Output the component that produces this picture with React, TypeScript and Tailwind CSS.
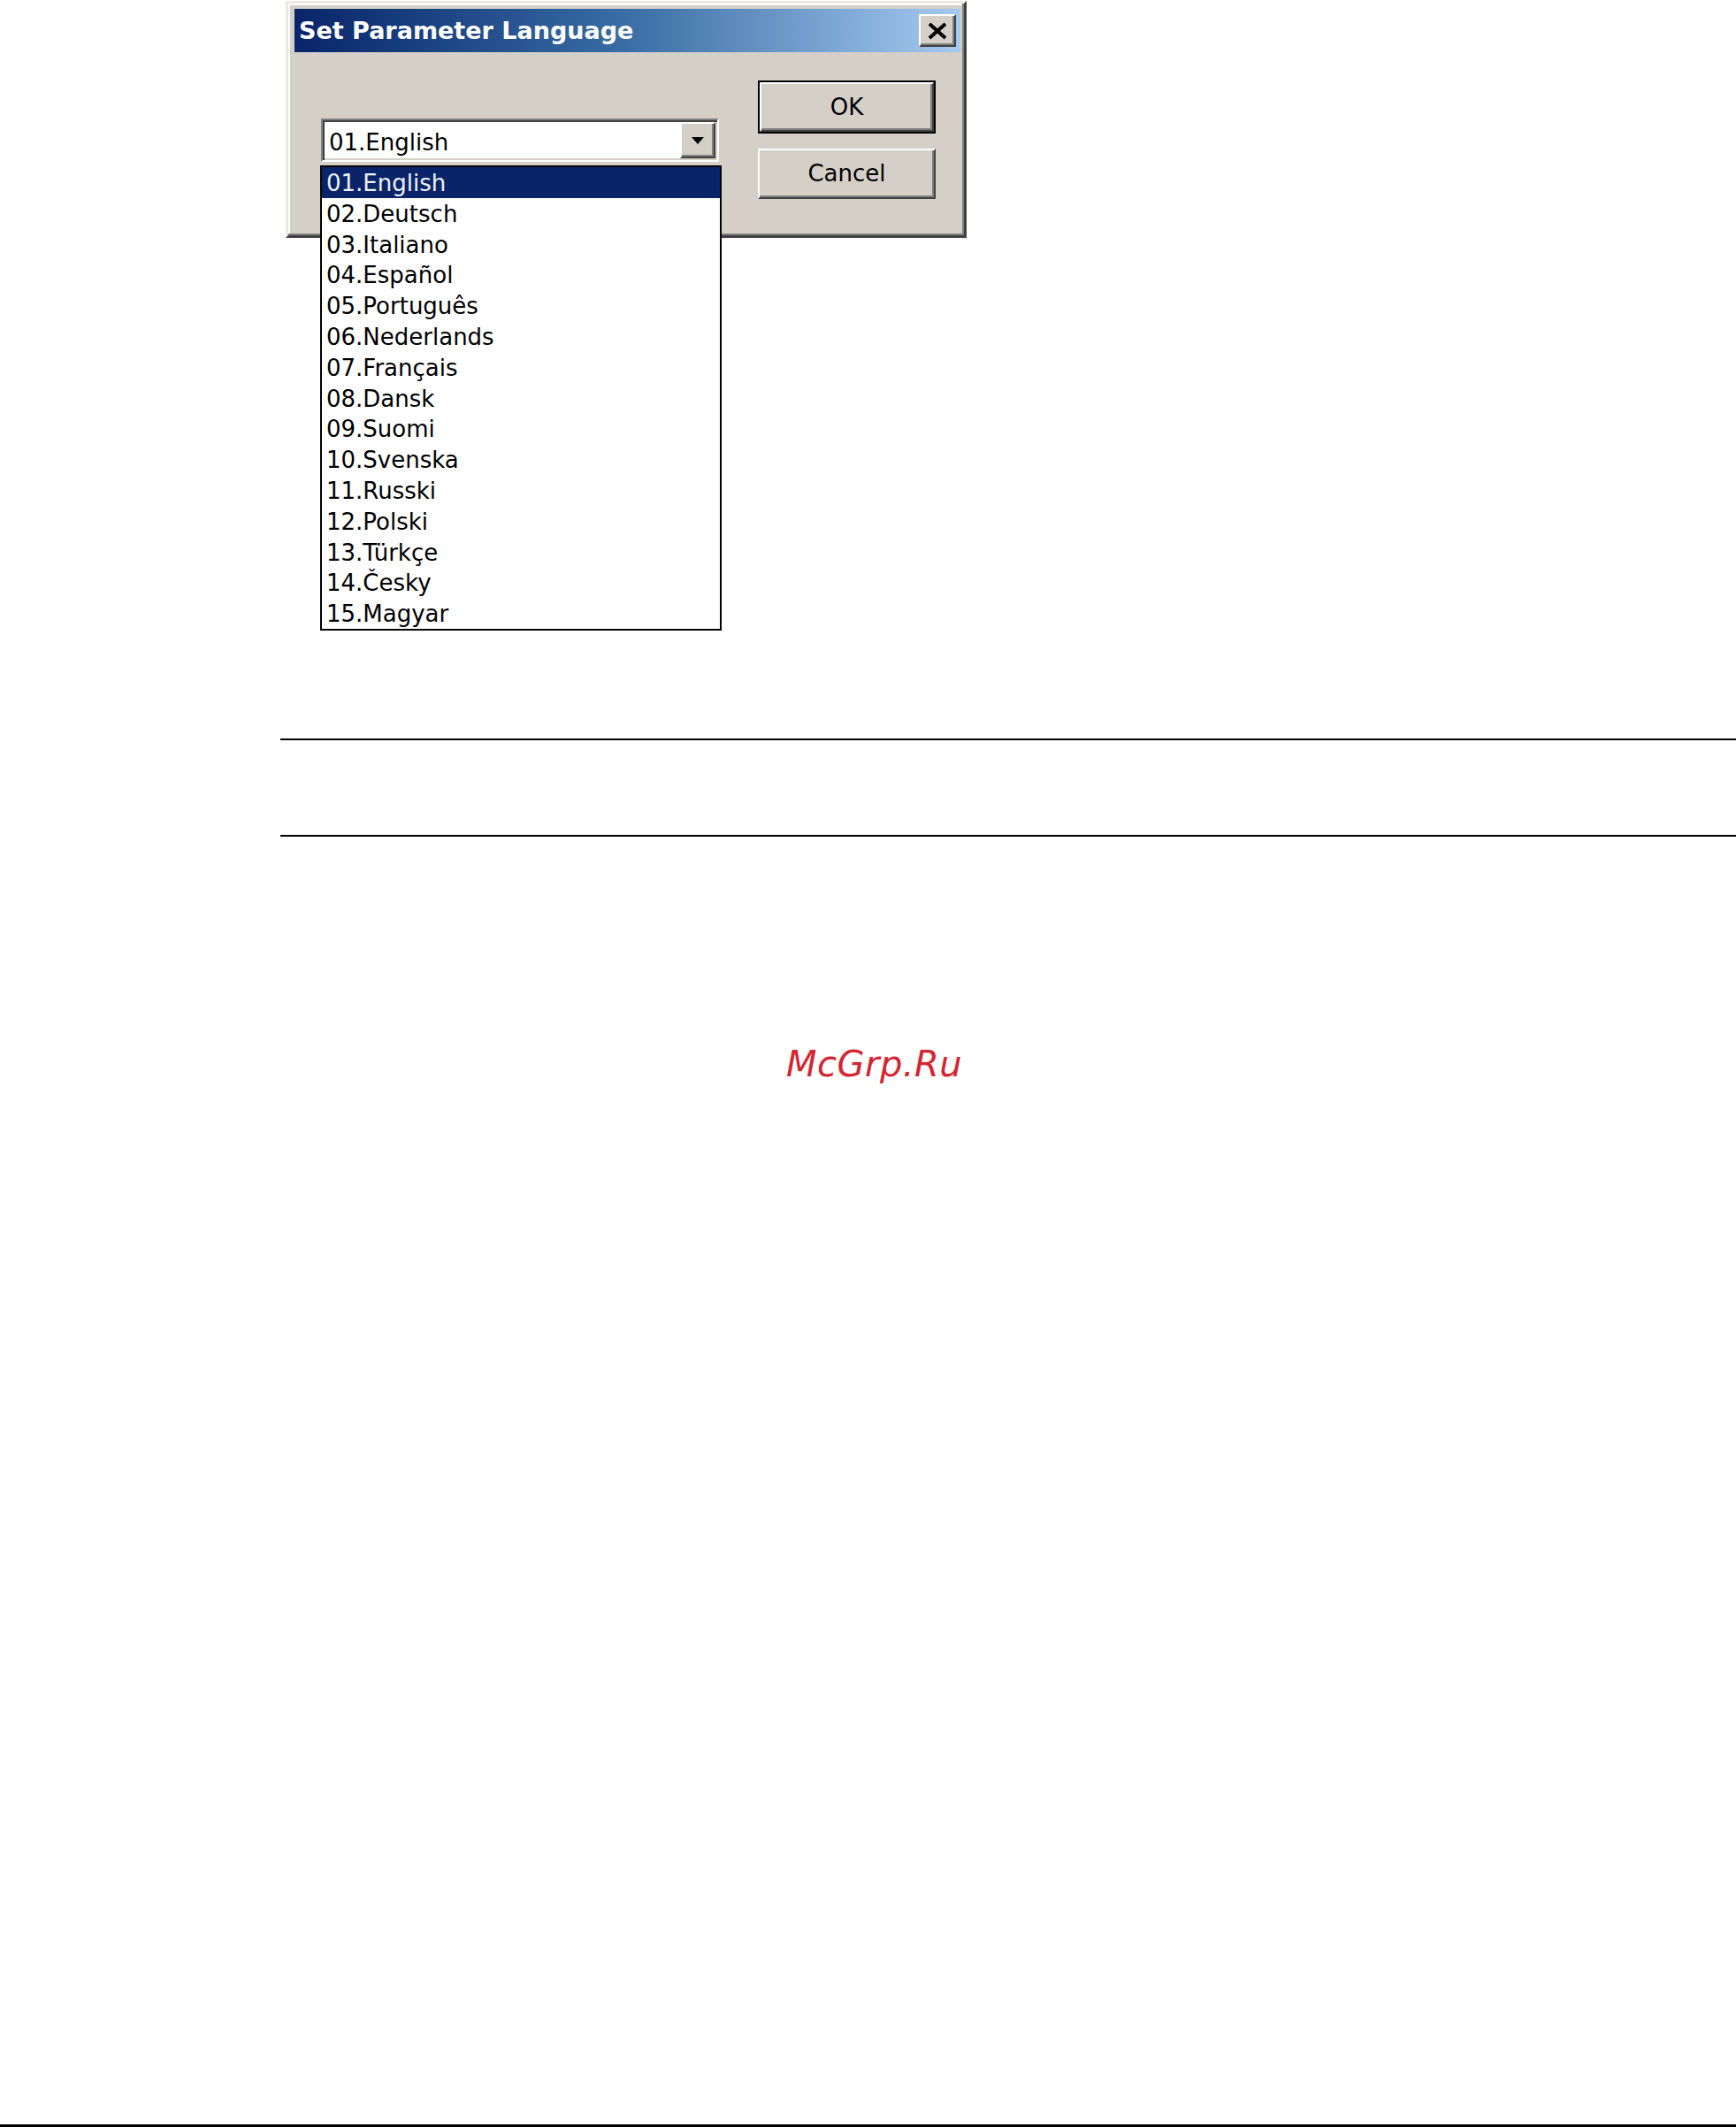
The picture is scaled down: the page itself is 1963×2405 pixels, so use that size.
const LANGUAGES = [
  '01.English',
  '02.Deutsch',
  '03.Italiano',
  '04.Español',
  '05.Português',
  '06.Nederlands',
  '07.Français',
  '08.Dansk',
  '09.Suomi',
  '10.Svenska',
  '11.Russki',
  '12.Polski',
  '13.Türkçe',
  '14.Česky',
  '15.Magyar',
];

const FONT = "font-['DejaVu_Sans',Verdana,sans-serif]";

// classic raised 3d edge
const RAISED =
  'bg-[#d4d0c8] border-2 border-t-[#ffffff] border-l-[#ffffff] border-r-[#404040] border-b-[#404040] shadow-[inset_-2px_-2px_0_#808080]';

function CloseGlyph() {
  return (
    <svg width="24" height="20" viewBox="0 0 24 20">
      <path d="M3 2 L21 18 M21 2 L3 18" stroke="#000" strokeWidth="4" />
    </svg>
  );
}

function ComboBox() {
  return (
    <div className="relative h-[49px] w-[450px] border-2 border-t-[#808080] border-l-[#808080] border-r-[#ffffff] border-b-[#ffffff] bg-white shadow-[inset_2px_2px_0_#404040,inset_-2px_-2px_0_#d4d0c8]">
      <div className="pl-[7px] pt-[6px] text-[26px] leading-[39px] text-black">01.English</div>
      <div className={`absolute right-[2px] top-[2px] bottom-[2px] flex w-[40px] items-center justify-center ${RAISED}`}>
        <svg width="14" height="8" viewBox="0 0 14 8">
          <polygon points="0,0 14,0 7,8" fill="#000" />
        </svg>
      </div>

      {/* open drop list, lies over the dialog edge */}
      <div className="absolute left-[-3px] top-[51px] z-10 w-[454px] border-2 border-black bg-white">
        {LANGUAGES.map((lang, i) => (
          <div
            key={lang}
            className={`h-[34.8px] pl-[5px] pt-[3px] text-[26px] leading-[31.8px] ${
              i === 0 ? 'bg-[#0a246a] text-[#eef2f8]' : 'text-black'
            }`}
          >
            {lang}
          </div>
        ))}
      </div>
    </div>
  );
}

function Dialog() {
  return (
    <div className="h-[268px] w-[770px] border-[3px] border-t-[#ece9e4] border-l-[#ece9e4] border-r-[#404040] border-b-[#404040] bg-[#d4d0c8] pt-[6px] pl-[7px] pr-[4px] shadow-[inset_-2px_-2px_0_#808080,inset_2px_2px_0_#ffffff]">
      <div className="flex h-[49px] items-center justify-between bg-linear-to-r from-[#0a246a] via-[#3a6ea5] to-[#a6caf0]">
        <div className="pl-[5px] text-[27px] font-bold leading-[46px] text-white">
          Set Parameter Language
        </div>
        <div className={`mr-[5px] flex h-[37px] w-[42px] items-center justify-center ${RAISED}`}>
          <CloseGlyph />
        </div>
      </div>

      <div className="flex">
        <div className="ml-[30px] mt-[75px]">
          <ComboBox />
        </div>
        <div className="ml-[44px] mt-[32px] flex flex-col gap-[17px]">
          <div className="h-[60px] w-[201px] border-2 border-black">
            <div className={`flex h-full w-full items-center justify-center text-[26px] text-black ${RAISED}`}>
              OK
            </div>
          </div>
          <div className={`flex h-[57px] w-[201px] items-center justify-center text-[26px] text-black ${RAISED}`}>
            Cancel
          </div>
        </div>
      </div>
    </div>
  );
}

export default function App() {
  return (
    <div className={`flex h-[2405px] w-full flex-col bg-white ${FONT}`}>
      <div className="pl-[323px] pt-[1px]">
        <Dialog />
      </div>

      <div className="ml-[317px] mt-[566px] h-[2px] bg-black" />
      <div className="ml-[317px] mt-[107px] h-[2px] bg-black" />

      <div className="mt-[233px] pl-[889px] text-[40px] italic leading-[48px] tracking-[0.5px] text-[#d42530]">
        McGrp.Ru
      </div>

      <div className="flex-1" />
      <div className="h-[3px] bg-black" />
    </div>
  );
}
